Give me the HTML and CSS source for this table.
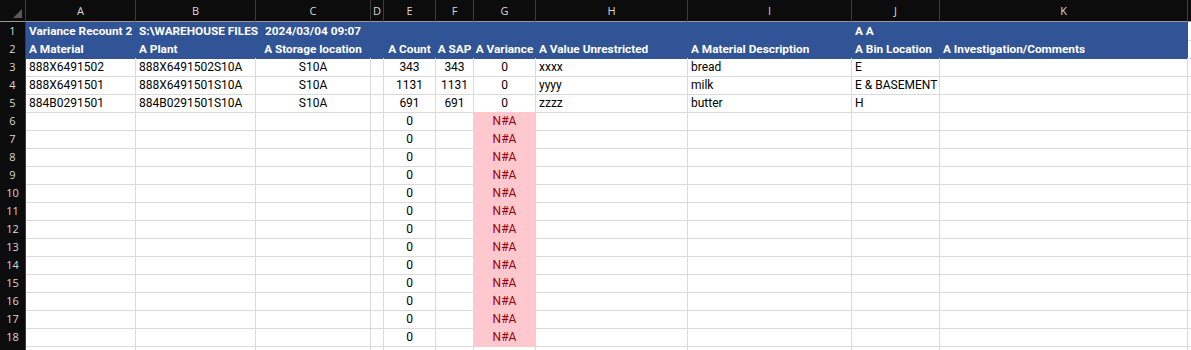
FILE: index.html
```html
<!DOCTYPE html>
<html lang="en">
<head>
<meta charset="utf-8">
<title>Variance Recount 2</title>
<link rel="stylesheet" href="styles.css">
</head>
<body>
<div class="sheet">
  <div class="row colhdr">
    <div class="h corner"><span class="tri"></span></div>
    <div class="h">A</div><div class="h">B</div><div class="h">C</div><div class="h">D</div><div class="h">E</div><div class="h">F</div><div class="h">G</div><div class="h">H</div><div class="h">I</div><div class="h">J</div><div class="h">K</div><div class="h last"></div>
  </div>

  <div class="row">
    <div class="rn">1</div>
    <div class="c hd">Variance Recount 2</div>
    <div class="c hd"><span class="spill">S:\WAREHOUSE FILES</span></div>
    <div class="c hd ctr">2024/03/04 09:07</div>
    <div class="c hd"></div><div class="c hd"></div><div class="c hd"></div><div class="c hd"></div><div class="c hd"></div><div class="c hd"></div>
    <div class="c hd">A A</div>
    <div class="c hd"></div>
    <div class="c"></div>
  </div>

  <div class="row">
    <div class="rn">2</div>
    <div class="c hd">A Material</div>
    <div class="c hd">A Plant</div>
    <div class="c hd ctr">A Storage location</div>
    <div class="c hd"></div>
    <div class="c hd ctr">A Count</div>
    <div class="c hd ctr">A SAP</div>
    <div class="c hd ctr">A Variance</div>
    <div class="c hd">A Value Unrestricted</div>
    <div class="c hd">A Material Description</div>
    <div class="c hd">A Bin Location</div>
    <div class="c hd">A Investigation/Comments</div>
    <div class="c"></div>
  </div>

  <div class="row">
    <div class="rn">3</div>
    <div class="c">888X6491502</div>
    <div class="c">888X6491502S10A</div>
    <div class="c ctr">S10A</div>
    <div class="c"></div>
    <div class="c ctr">343</div>
    <div class="c ctr">343</div>
    <div class="c ctr">0</div>
    <div class="c">xxxx</div>
    <div class="c">bread</div>
    <div class="c">E</div>
    <div class="c"></div>
    <div class="c"></div>
  </div>

  <div class="row">
    <div class="rn">4</div>
    <div class="c">888X6491501</div>
    <div class="c">888X6491501S10A</div>
    <div class="c ctr">S10A</div>
    <div class="c"></div>
    <div class="c ctr">1131</div>
    <div class="c ctr">1131</div>
    <div class="c ctr">0</div>
    <div class="c">yyyy</div>
    <div class="c">milk</div>
    <div class="c">E &amp; BASEMENT</div>
    <div class="c"></div>
    <div class="c"></div>
  </div>

  <div class="row">
    <div class="rn">5</div>
    <div class="c">884B0291501</div>
    <div class="c">884B0291501S10A</div>
    <div class="c ctr">S10A</div>
    <div class="c"></div>
    <div class="c ctr">691</div>
    <div class="c ctr">691</div>
    <div class="c ctr">0</div>
    <div class="c">zzzz</div>
    <div class="c">butter</div>
    <div class="c">H</div>
    <div class="c"></div>
    <div class="c"></div>
  </div>

  <div class="row"><div class="rn">6</div><div class="c"></div><div class="c"></div><div class="c"></div><div class="c"></div><div class="c ctr">0</div><div class="c"></div><div class="c ctr na">N#A</div><div class="c"></div><div class="c"></div><div class="c"></div><div class="c"></div><div class="c"></div></div>
  <div class="row"><div class="rn">7</div><div class="c"></div><div class="c"></div><div class="c"></div><div class="c"></div><div class="c ctr">0</div><div class="c"></div><div class="c ctr na">N#A</div><div class="c"></div><div class="c"></div><div class="c"></div><div class="c"></div><div class="c"></div></div>
  <div class="row"><div class="rn">8</div><div class="c"></div><div class="c"></div><div class="c"></div><div class="c"></div><div class="c ctr">0</div><div class="c"></div><div class="c ctr na">N#A</div><div class="c"></div><div class="c"></div><div class="c"></div><div class="c"></div><div class="c"></div></div>
  <div class="row"><div class="rn">9</div><div class="c"></div><div class="c"></div><div class="c"></div><div class="c"></div><div class="c ctr">0</div><div class="c"></div><div class="c ctr na">N#A</div><div class="c"></div><div class="c"></div><div class="c"></div><div class="c"></div><div class="c"></div></div>
  <div class="row"><div class="rn">10</div><div class="c"></div><div class="c"></div><div class="c"></div><div class="c"></div><div class="c ctr">0</div><div class="c"></div><div class="c ctr na">N#A</div><div class="c"></div><div class="c"></div><div class="c"></div><div class="c"></div><div class="c"></div></div>
  <div class="row"><div class="rn">11</div><div class="c"></div><div class="c"></div><div class="c"></div><div class="c"></div><div class="c ctr">0</div><div class="c"></div><div class="c ctr na">N#A</div><div class="c"></div><div class="c"></div><div class="c"></div><div class="c"></div><div class="c"></div></div>
  <div class="row"><div class="rn">12</div><div class="c"></div><div class="c"></div><div class="c"></div><div class="c"></div><div class="c ctr">0</div><div class="c"></div><div class="c ctr na">N#A</div><div class="c"></div><div class="c"></div><div class="c"></div><div class="c"></div><div class="c"></div></div>
  <div class="row"><div class="rn">13</div><div class="c"></div><div class="c"></div><div class="c"></div><div class="c"></div><div class="c ctr">0</div><div class="c"></div><div class="c ctr na">N#A</div><div class="c"></div><div class="c"></div><div class="c"></div><div class="c"></div><div class="c"></div></div>
  <div class="row"><div class="rn">14</div><div class="c"></div><div class="c"></div><div class="c"></div><div class="c"></div><div class="c ctr">0</div><div class="c"></div><div class="c ctr na">N#A</div><div class="c"></div><div class="c"></div><div class="c"></div><div class="c"></div><div class="c"></div></div>
  <div class="row"><div class="rn">15</div><div class="c"></div><div class="c"></div><div class="c"></div><div class="c"></div><div class="c ctr">0</div><div class="c"></div><div class="c ctr na">N#A</div><div class="c"></div><div class="c"></div><div class="c"></div><div class="c"></div><div class="c"></div></div>
  <div class="row"><div class="rn">16</div><div class="c"></div><div class="c"></div><div class="c"></div><div class="c"></div><div class="c ctr">0</div><div class="c"></div><div class="c ctr na">N#A</div><div class="c"></div><div class="c"></div><div class="c"></div><div class="c"></div><div class="c"></div></div>
  <div class="row"><div class="rn">17</div><div class="c"></div><div class="c"></div><div class="c"></div><div class="c"></div><div class="c ctr">0</div><div class="c"></div><div class="c ctr na">N#A</div><div class="c"></div><div class="c"></div><div class="c"></div><div class="c"></div><div class="c"></div></div>
  <div class="row"><div class="rn">18</div><div class="c"></div><div class="c"></div><div class="c"></div><div class="c"></div><div class="c ctr">0</div><div class="c"></div><div class="c ctr na">N#A</div><div class="c"></div><div class="c"></div><div class="c"></div><div class="c"></div><div class="c"></div></div>
  <div class="row"><div class="rn"></div><div class="c"></div><div class="c"></div><div class="c"></div><div class="c"></div><div class="c"></div><div class="c"></div><div class="c"></div><div class="c"></div><div class="c"></div><div class="c"></div><div class="c"></div><div class="c"></div></div>
</div>
</body>
</html>
```
FILE: styles.css
```css
* { box-sizing: border-box; margin: 0; padding: 0; }
html, body { width: 1191px; height: 350px; overflow: hidden; background: #ffffff; }
body { font-family: "Roboto", "Liberation Sans", sans-serif; font-size: 12px; color: #000; }

.sheet { display: flex; flex-direction: column; }

.row {
  display: grid;
  grid-template-columns: 26px 110px 120px 115px 13px 52px 38px 62px 152px 164px 88px 248px 1fr;
  height: 18px;
}

.colhdr { height: 22px; background: #0c0c0c; }

.h {
  position: relative;
  background: #0c0c0c;
  color: #d8d8d8;
  font-family: "Open Sans", "Noto Sans", sans-serif;
  font-size: 11px;
  line-height: 21px;
  text-align: center;
  border-right: 1px solid #3c3c3c;
  border-bottom: 1px solid #9a9a9a;
}
.h.last { border-right: none; }
.tri {
  position: absolute;
  right: 3px;
  bottom: 3px;
  width: 0; height: 0;
  border-left: 9px solid transparent;
  border-bottom: 9px solid #5a5a5a;
}

.rn {
  background: #0c0c0c;
  color: #d8d8d8;
  font-family: "Open Sans", "Noto Sans", sans-serif;
  font-size: 11px;
  line-height: 18px;
  text-align: center;
  border-right: 1px solid #3c3c3c;
  border-bottom: 1px solid #1e1e1e;
}

.c {
  border-right: 1px solid #dadada;
  border-bottom: 1px solid #dadada;
  padding: 0 3px;
  line-height: 18px;
  white-space: nowrap;
  overflow: visible;
}
.ctr { text-align: center; padding: 0; }

.hd {
  background: #305496;
  color: #ffffff;
  font-weight: 700;
  font-size: 11.8px;
  border-right-color: #305496;
  border-bottom-color: #305496;
}
.spill { position: relative; z-index: 1; }

.na {
  background: #ffc7ce;
  color: #9c0006;
  border-right-color: #ffc7ce;
  border-bottom-color: #ffc7ce;
}
```
